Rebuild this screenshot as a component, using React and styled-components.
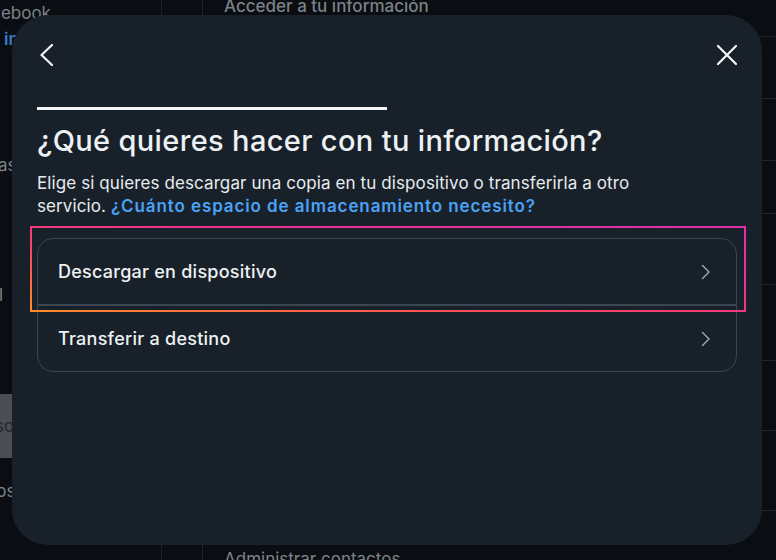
import React from "react";
import styled, { createGlobalStyle } from "styled-components";

const GlobalStyle = createGlobalStyle`
  html, body {
    margin: 0;
    padding: 0;
    background: #0a0e12;
    overflow: hidden;
  }
  body {
    font-family: Inter, "Noto Sans", sans-serif;
    -webkit-font-smoothing: antialiased;
  }
`;

/* ---- page behind the dialog ---- */

const Page = styled.div`
  display: flex;
  width: 776px;
  height: 560px;
  overflow: hidden;
  color: #7f8489;
  font-size: 17px;
`;

const Sidebar = styled.div`
  width: 161px;
  flex-shrink: 0;
  display: flex;
  flex-direction: column;
  border-right: 1px solid #1d2329;
`;

const SideItem = styled.div`
  margin-left: ${(p) => p.$shift || 0}px;
  margin-top: ${(p) => p.$top || 0}px;
  height: 22px;
  line-height: 22px;
  color: ${(p) => (p.$link ? "#3a7bc8" : "#7f8489")};
  font-weight: ${(p) => (p.$link ? 600 : 400)};
  white-space: nowrap;
`;

const SideButton = styled.div`
  margin-top: ${(p) => p.$top}px;
  margin-left: -46px;
  width: 150px;
  height: 64px;
  background: #4a4d51;
  color: #25272a;
  display: flex;
  align-items: center;
  font-size: 17px;
`;

const Gutter = styled.div`
  width: 40px;
  flex-shrink: 0;
  border-right: 1px solid #1d2329;
`;

const Main = styled.div`
  flex: 1;
  display: flex;
  flex-direction: column;
`;

const MainRow = styled.div`
  height: ${(p) => p.$h}px;
  flex-shrink: 0;
  border-bottom: 1px solid #20262c;
  padding-left: 21px;
  display: flex;
  align-items: ${(p) => p.$align || "center"};
  white-space: nowrap;
`;

const Heading = styled.div`
  padding-left: 21px;
  margin-top: -4px;
  font-size: 17px;
  font-weight: 500;
  color: #7c8186;
  white-space: nowrap;
`;

/* ---- dialog ---- */

const Dialog = styled.div`
  position: fixed;
  left: 12px;
  top: 15px;
  width: 750px;
  height: 530px;
  box-sizing: border-box;
  padding: 25px 25px;
  border-radius: 36px;
  background: #18212a;
  color: #eef1f3;
  display: flex;
  flex-direction: column;
`;

const Header = styled.div`
  display: flex;
  justify-content: space-between;
  align-items: center;
  height: 30px;
`;

const IconButton = styled.button`
  background: none;
  border: none;
  padding: 0;
  height: 30px;
  display: flex;
  align-items: center;
  color: #f4f6f8;
  cursor: pointer;
`;

const Progress = styled.div`
  margin-top: 37px;
  height: 3px;
  width: 100%;
`;

const ProgressFill = styled.div`
  height: 100%;
  background: #f2f4f6;
`;

const Title = styled.h1`
  margin: 13px 0 0;
  font-size: 29px;
  line-height: 36px;
  font-weight: 500;
  letter-spacing: 0.35px;
  color: #eef1f4;
`;

const Description = styled.p`
  margin: 13px 0 0;
  max-width: 640px;
  font-size: 17px;
  line-height: 23px;
  letter-spacing: 0.1px;
  color: #e8ebee;
`;

const Link = styled.a`
  color: #4aa3f5;
  font-weight: 600;
  letter-spacing: 0.9px;
  text-decoration: none;
`;

const OptionList = styled.div`
  margin-top: 20px;
  border: 1px solid #39444f;
  border-radius: 16px;
  display: flex;
  flex-direction: column;
`;

const Option = styled.div`
  position: relative;
  height: 65px;
  padding: 0 24px 0 20px;
  display: flex;
  align-items: center;
  justify-content: space-between;
  font-size: 18px;
  font-weight: 500;
  letter-spacing: 0.25px;
  color: #eef1f4;
  & + & {
    border-top: 2px solid #3a4651;
  }
  &.focused::after {
    content: "";
    position: absolute;
    top: -13px;
    left: -8px;
    right: -10px;
    bottom: -8px;
    border: 2px solid;
    border-image: linear-gradient(to top right, #ff8a2a 0%, #fb4660 35%, #f0328e 60%, #e02fb0 100%) 1;
    pointer-events: none;
  }
`;

const Chevron = styled.svg`
  width: 12px;
  height: 16px;
  flex-shrink: 0;
`;

const ChevronRight = () => (
  <Chevron viewBox="0 0 12 16" fill="none">
    <path d="M2.5 1.5 L9 8 L2.5 14.5" stroke="#a2abb3" strokeWidth="1.4" strokeLinecap="round" strokeLinejoin="round" />
  </Chevron>
);

const BackIcon = () => (
  <svg width="16" height="22" viewBox="0 0 16 22" fill="none">
    <path d="M15 1 L4.5 11 L15 21" stroke="#f4f6f8" strokeWidth="2.2" strokeLinecap="round" strokeLinejoin="round" />
  </svg>
);

const CloseIcon = () => (
  <svg width="22" height="22" viewBox="0 0 22 22" fill="none">
    <path d="M3 2 L21 20 M21 2 L3 20" stroke="#f4f6f8" strokeWidth="2.2" strokeLinecap="round" />
  </svg>
);

const options = [
  { label: "Descargar en dispositivo", focused: true },
  { label: "Transferir a destino", focused: false },
];

export default function App() {
  return (
    <>
      <GlobalStyle />
      <Page>
        <Sidebar>
          <SideItem $shift={-28} $top={2}>Facebook</SideItem>
          <SideItem $shift={4} $top={4} $link>información</SideItem>
          <SideItem $shift={-50} $top={104}>Cuentas</SideItem>
          <SideItem $shift={-1} $top={108}>l</SideItem>
          <SideButton $top={88}>Acceso</SideButton>
          <SideItem $shift={-59} $top={22}>Permisos</SideItem>
        </Sidebar>
        <Gutter />
        <Main>
          <Heading>Acceder a tu información</Heading>
          <MainRow $h={20} />
          <MainRow $h={61} />
          <MainRow $h={61} />
          <MainRow $h={52} />
          <MainRow $h={70} />
          <MainRow $h={75} />
          <MainRow $h={69} />
          <MainRow $h={79} />
          <MainRow $h={58} $align="flex-end">Administrar contactos</MainRow>
        </Main>
      </Page>

      <Dialog role="dialog">
        <Header>
          <IconButton aria-label="Atrás"><BackIcon /></IconButton>
          <IconButton aria-label="Cerrar"><CloseIcon /></IconButton>
        </Header>
        <Progress>
          <ProgressFill style={{ width: "50%" }} />
        </Progress>
        <Title>¿Qué quieres hacer con tu información?</Title>
        <Description>
          Elige si quieres descargar una copia en tu dispositivo o transferirla a otro servicio.{" "}
          <Link href="#">¿Cuánto espacio de almacenamiento necesito?</Link>
        </Description>
        <OptionList>
          {options.map((o) => (
            <Option key={o.label} className={o.focused ? "focused" : undefined}>
              {o.label}
              <ChevronRight />
            </Option>
          ))}
        </OptionList>
      </Dialog>
    </>
  );
}
